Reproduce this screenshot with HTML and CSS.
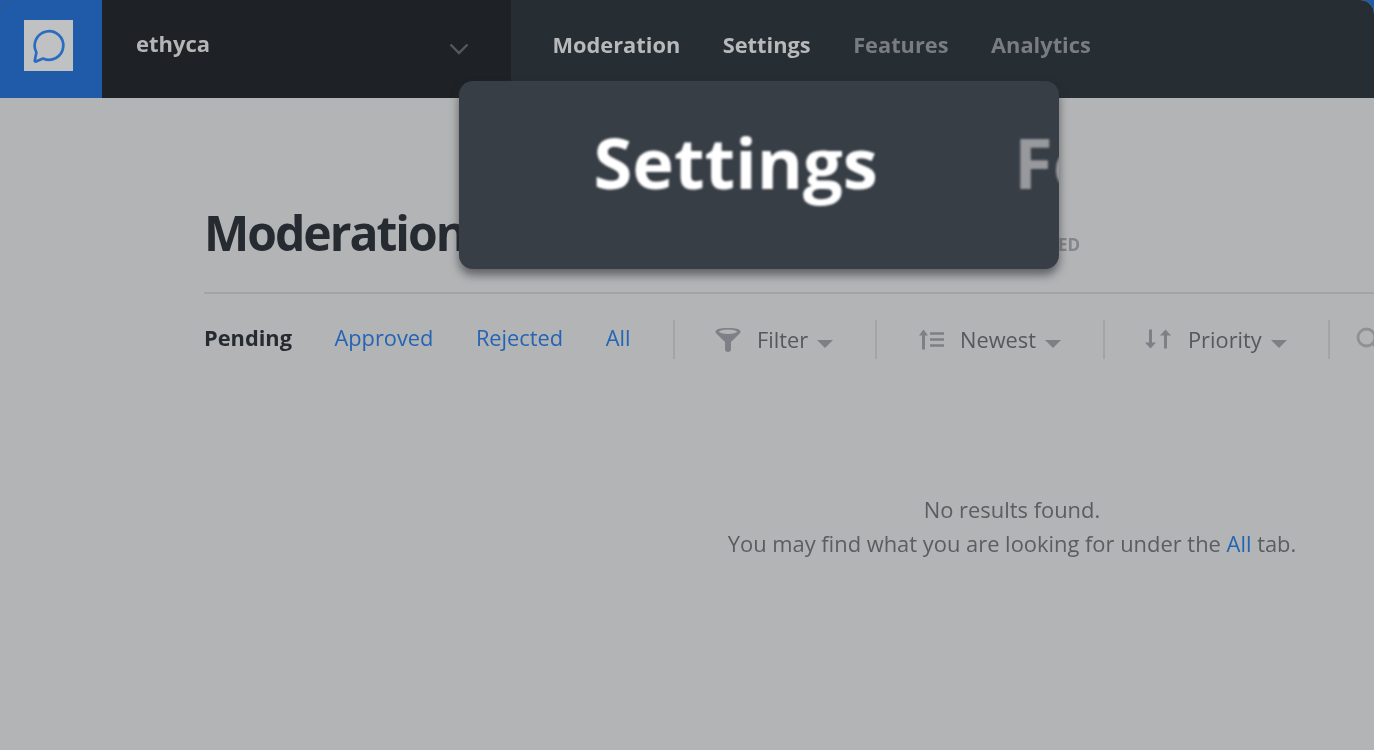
FILE: index.html
```html
<!DOCTYPE html>
<html lang="en">
<head>
<meta charset="utf-8">
<title>Moderation</title>
<link rel="stylesheet" href="styles.css">
</head>
<body>
<div class="app">
  <header class="topbar">
    <div class="logo-cell">
      <div class="logo-box">
        <svg class="logo-icon" viewBox="0 0 36 36" width="36" height="36"><path d="M5.400 24.300A14.300 14.300 0 1 1 12 30.500L5 33.500c-.8.300-1.300-.1-1.200-.9z" fill="none" stroke="#2a6cc0" stroke-width="2.700" stroke-linejoin="round"/></svg>
      </div>
    </div>
    <div class="switcher">
      <span class="org">ethyca</span>
      <svg class="chev" width="20" height="12" viewBox="0 0 20 12"><path d="M1.500 1.500L10 10l8.500-8.500" fill="none" stroke="#55595e" stroke-width="2.400"/></svg>
    </div>
    <nav class="nav">
      <a class="nav-item strong">Moderation</a>
      <a class="nav-item strong">Settings</a>
      <a class="nav-item">Features</a>
      <a class="nav-item">Analytics</a>
    </nav>
  </header>
  <main class="content">
    <div class="title-row">
      <h1 class="title">Moderation</h1>
      <span class="status">ED</span>
    </div>
    <div class="toolbar">
      <div class="tabs">
        <a class="tab active">Pending</a>
        <a class="tab">Approved</a>
        <a class="tab">Rejected</a>
        <a class="tab">All</a>
      </div>
      <div class="tool tool-filter">
        <svg class="tool-icon" width="26" height="26" viewBox="0 0 26 26"><path d="M.5 4.500C.5 2 6 1 13 1s12.500 1 12.500 3.500c0 1-.5 1.800-1.300 2.500L16 15v7.500c0 1.500-1.200 2.500-3 2.500s-3-1-3-2.500V15L1.800 7C1 6.300.5 5.500.5 4.500z" fill="#7d8084"/><ellipse cx="13" cy="4.800" rx="9" ry="2.200" fill="#b3b4b6"/></svg>
        <span>Filter</span><i class="caret"></i>
      </div>
      <div class="tool tool-newest">
        <svg width="28" height="22" viewBox="0 0 28 22"><path d="M4.500 21.500V5" stroke="#7d8084" stroke-width="3"/><path d="M0 7.500L4.500 1.500 9 7.500z" fill="#7d8084"/><path d="M11 5.500h14M11 11.500h14M11 17.500h14" stroke="#7d8084" stroke-width="2.500"/></svg>
        <span>Newest</span><i class="caret"></i>
      </div>
      <div class="tool tool-priority">
        <svg width="27" height="22" viewBox="0 0 27 22"><path d="M5.500 1.500V15" stroke="#7d8084" stroke-width="3"/><path d="M0 14.500h11l-5.500 6z" fill="#7d8084"/><path d="M20.500 20.500V7" stroke="#7d8084" stroke-width="3"/><path d="M15 7.500h11l-5.500-6z" fill="#7d8084"/></svg>
        <span>Priority</span><i class="caret"></i>
      </div>
      <div class="tool tool-search">
        <svg width="24" height="24" viewBox="0 0 24 24"><circle cx="10.500" cy="10.500" r="8.500" fill="none" stroke="#8f9194" stroke-width="2.800"/><path d="M17 17l6 6" stroke="#8f9194" stroke-width="2.800"/></svg>
      </div>
    </div>
    <div class="empty">
      <p>No results found.</p>
      <p>You may find what you are looking for under the <a class="link">All</a> tab.</p>
    </div>
  </main>
</div>
<div class="lens">
  <span class="lens-active">Settings</span>
  <span class="lens-next">Features</span>
</div>
</body>
</html>
```
FILE: styles.css
```css
* { box-sizing: border-box; }
html, body { margin: 0; height: 100%; }
body {
  background: #1f5ba8;
  font-family: "Open Sans", "Noto Sans", sans-serif;
  overflow: hidden;
  position: relative;
}
.app {
  width: 1374px;
  height: 750px;
  background: #b3b4b6;
  border-radius: 14px 14px 0 0;
  overflow: hidden;
  display: flex;
  flex-direction: column;
  filter: blur(.45px);
}
.topbar { display: flex; height: 98px; flex: none; background: #262d33; }
.logo-cell {
  width: 102px;
  flex: none;
  background: #1f5ba8;
  display: flex;
  align-items: center;
  padding-left: 24px;
}
.logo-box {
  width: 49px;
  height: 51px;
  margin-top: -7px;
  background: #c0c1c3;
  display: flex;
  align-items: center;
  justify-content: center;
}
.logo-icon { display: block; }
.switcher {
  width: 409px;
  flex: none;
  background: #1e2226;
  display: flex;
  align-items: center;
  justify-content: space-between;
  padding: 0 42px 10px 34px;
}
.org { color: #b4b5b7; font-size: 22px; font-weight: 700; position: relative; top: -1px; }
.chev { margin-top: 9px; }
.nav { display: flex; gap: 42.500px; padding: 0 0 10px 41.500px; align-items: center; }
.nav-item { font-size: 21.800px; font-weight: 700; color: #797c80; }
.nav-item.strong { color: #b8b9bb; }
.content { flex: 1; padding-left: 204px; min-width: 0; overflow: hidden; }
.title-row { display: flex; align-items: baseline; height: 196px; padding-top: 100px; border-bottom: 2px solid #a3a4a6; }
.title { margin: 0; font-size: 48px; font-weight: 700; letter-spacing: -2px; line-height: 70px; color: #262b31; width: 854px; flex: none; }
.status { font-size: 17px; font-weight: 700; color: #84868a; }
.toolbar { display: flex; align-items: center; height: 90px; color: #55585c; font-size: 21.800px; }
.tabs { display: flex; flex: none; gap: 42.500px; width: 471px; height: 39px; align-items: center; border-right: 2px solid #a3a4a6; }
.tab { color: #2464b4; font-size: 21.800px; margin-bottom: 4px; }
.tab.active { color: #262b31; font-weight: 700; }
.tool { display: flex; flex: none; align-items: center; height: 39px; border-right: 2px solid #a3a4a6; padding-left: 40px; gap: 16px; }
.tool-icon { margin-top: 2px; }
.tool-filter { width: 202px; }
.tool-newest { width: 228px; padding-left: 42px; gap: 13px; }
.tool-priority { width: 225px; padding-left: 40px; gap: 16px; }
.tool-search { border-right: 0; padding-left: 26px; width: 60px; }
.caret {
  width: 0;
  height: 0;
  border-left: 8px solid transparent;
  border-right: 8px solid transparent;
  border-top: 8px solid #7d8084;
  margin-left: -7px;
  margin-top: 10px;
}
.tool-newest .caret { margin-left: -4px; }
.empty { padding-top: 109px; text-align: center; width: 1616px; font-size: 21.900px; line-height: 34px; color: #5a5d61; }
.empty p { margin: 0; }
.link { color: #2464b4; }
.lens {
  position: absolute;
  left: 459px;
  top: 81px;
  width: 600px;
  height: 188px;
  background: #383e46;
  border-radius: 14px;
  overflow: hidden;
  box-shadow: 0 6px 10px rgba(40, 42, 46, .6);
  font-size: 70.500px;
  font-weight: 700;
  line-height: 162px;
  white-space: nowrap;
}
.lens-active { position: absolute; left: 134.500px; top: 0; color: #fff; filter: blur(.8px); }
.lens-next { position: absolute; left: 555px; top: 0; color: #97999c; filter: blur(.8px); }
```
